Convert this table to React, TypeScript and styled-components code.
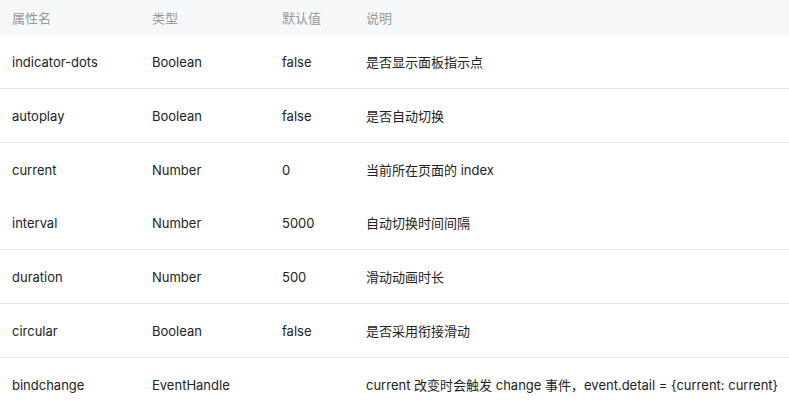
import React from "react";
import styled, { createGlobalStyle } from "styled-components";

const Global = createGlobalStyle`
  html, body { margin: 0; padding: 0; background: #fff; }
  body { font-family: Inter, "Noto Sans CJK SC", sans-serif; }
`;

const Table = styled.div`
  width: 789px;
  font-size: 13px;
  color: #333;
`;

const Row = styled.div<{ $head?: boolean; $noBorder?: boolean }>`
  display: grid;
  grid-template-columns: 140px 130px 84px 1fr;
  align-items: center;
  height: ${(p) => (p.$head ? "35px" : "53px")};
  background: ${(p) => (p.$head ? "#f7f8fa" : "#fff")};
  color: ${(p) => (p.$head ? "#999" : "#222")};
  border-bottom: ${(p) => (p.$head || p.$noBorder ? "none" : "1px solid #e5e5e5")};
  &:last-child { border-bottom: none; }
`;

const Cell = styled.div`
  padding-left: 12px;
  white-space: nowrap;
`;

const rows: [string, string, string, string, boolean?][] = [
  ["indicator-dots", "Boolean", "false", "是否显示面板指示点"],
  ["autoplay", "Boolean", "false", "是否自动切换"],
  ["current", "Number", "0", "当前所在页面的 index", true],
  ["interval", "Number", "5000", "自动切换时间间隔"],
  ["duration", "Number", "500", "滑动动画时长"],
  ["circular", "Boolean", "false", "是否采用衔接滑动"],
  ["bindchange", "EventHandle", "", "current 改变时会触发 change 事件，event.detail = {current: current}"],
];

export default function App() {
  return (
    <>
      <Global />
      <Table>
        <Row $head>
          <Cell>属性名</Cell>
          <Cell>类型</Cell>
          <Cell>默认值</Cell>
          <Cell>说明</Cell>
        </Row>
        {rows.map(([a, b, c, d, nb]) => (
          <Row key={a} $noBorder={nb}>
            <Cell>{a}</Cell>
            <Cell>{b}</Cell>
            <Cell>{c}</Cell>
            <Cell>{d}</Cell>
          </Row>
        ))}
      </Table>
    </>
  );
}
